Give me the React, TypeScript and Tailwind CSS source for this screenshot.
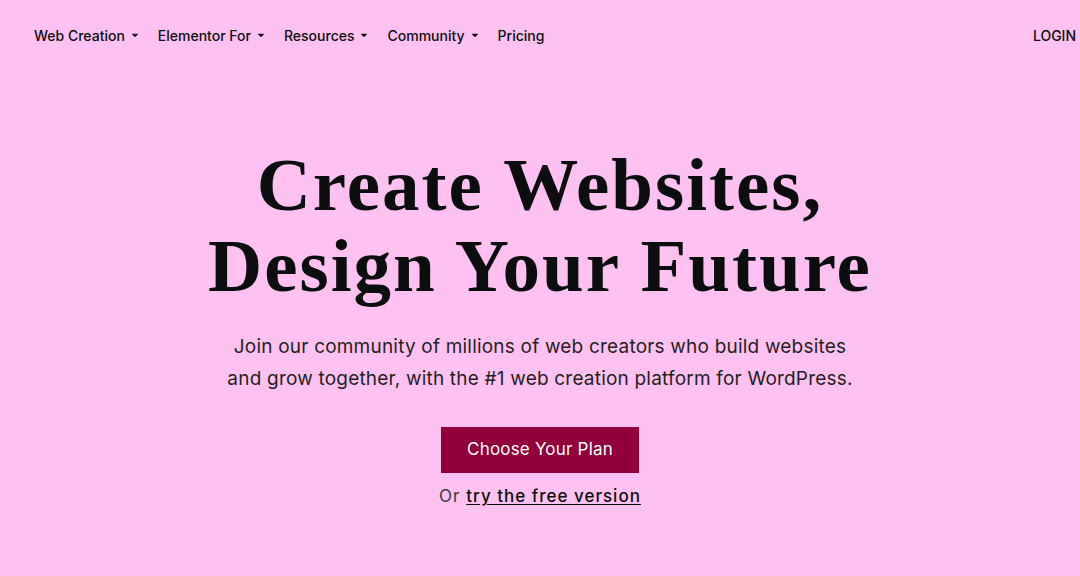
import { FaCaretDown } from "react-icons/fa";

const navItems = [
  { label: "Web Creation", dropdown: true },
  { label: "Elementor For", dropdown: true },
  { label: "Resources", dropdown: true },
  { label: "Community", dropdown: true },
  { label: "Pricing", dropdown: false },
];

export default function App() {
  return (
    <div
      className="min-h-[576px] w-full bg-[#ffc1f1] text-[#0c0d0e]"
      style={{ fontFamily: "Inter, 'Noto Sans', sans-serif" }}
    >
      <header className="flex items-center justify-between pl-[34px] pr-1 h-[70px]">
        <nav className="flex items-center gap-[18px]">
          {navItems.map((item) => (
            <a
              key={item.label}
              className="flex items-center gap-[5px] text-[14px] font-medium"
            >
              {item.label}
              {item.dropdown && <FaCaretDown className="h-[10px] w-[10px]" />}
            </a>
          ))}
        </nav>
        <a className="text-[14px] font-medium">LOGIN</a>
      </header>

      <main className="flex flex-col items-center pt-[74px] text-center">
        <h1
          className="text-[75px] font-bold leading-[81px] tracking-[2px]"
          style={{ fontFamily: "'Liberation Serif', serif" }}
        >
          Create Websites,
          <br />
          Design Your Future
        </h1>
        <p className="mt-[25px] text-[19px] leading-[32px] tracking-[0.2px] text-[#1f1f1f]">
          Join our community of millions of web creators who build websites
          <br />
          and grow together, with the #1 web creation platform for WordPress.
        </p>
        <button className="mt-[32px] h-[46px] w-[198px] bg-[#92003b] text-[17px] tracking-[0.2px] text-white">
          Choose Your Plan
        </button>
        <p className="mt-[11px] text-[17px] tracking-[1px] text-[#3a3a3a]">
          Or{" "}
          <a className="font-medium text-[#0c0d0e] underline underline-offset-2">
            try the free version
          </a>
        </p>
      </main>
    </div>
  );
}
